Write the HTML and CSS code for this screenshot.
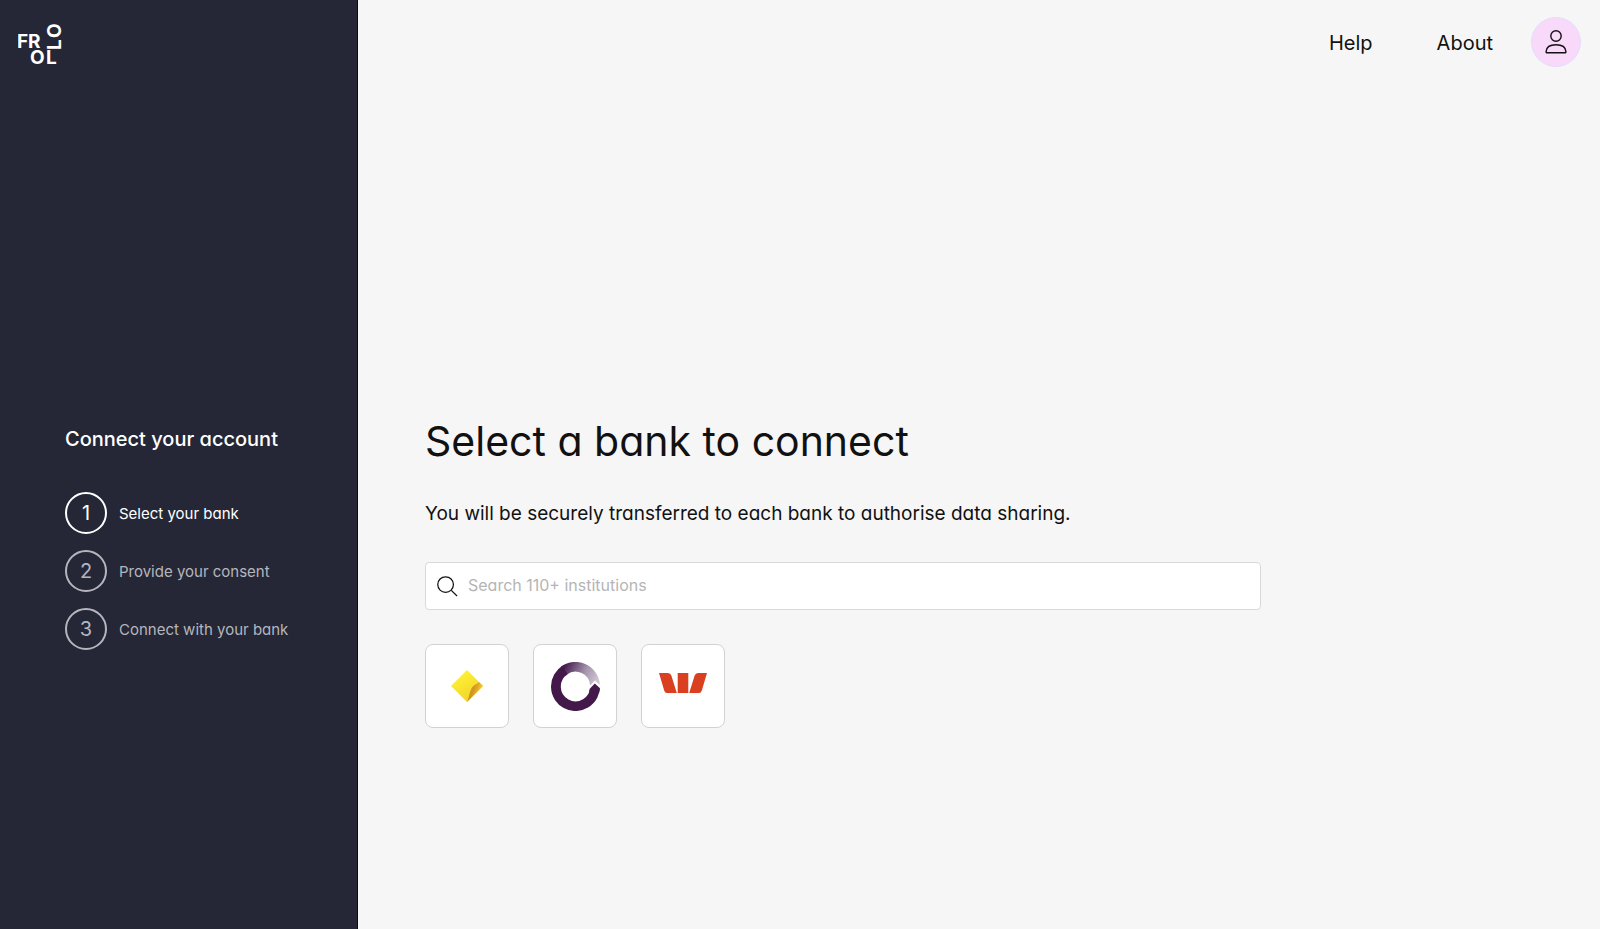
FILE: index.html
```html
<!DOCTYPE html>
<html lang="en">
<head>
  <meta charset="UTF-8">
  <meta name="viewport" content="width=device-width, initial-scale=1.0">
  <title>Frollo - Select a bank</title>
  <link rel="stylesheet" href="styles.css">
</head>
<body>
  <div class="page">
    <!-- left panel -->
    <aside class="sidebar">
      <a class="logo" href="#" aria-label="Frollo">
        <svg width="52" height="52" viewBox="0 0 52 52" aria-hidden="true">
          <text x="-1" y="25">F</text>
          <text x="10" y="25">R</text>
          <text x="12" y="41">O</text>
          <text x="28" y="41">L</text>
          <text transform="translate(43 27) rotate(-90)">L</text>
          <text transform="translate(43 15) rotate(-90)">O</text>
        </svg>
      </a>
      <nav class="steps">
        <h2>Connect your account</h2>
        <ol>
          <li class="step active"><span class="num">1</span>Select your bank</li>
          <li class="step"><span class="num">2</span>Provide your consent</li>
          <li class="step"><span class="num">3</span>Connect with your bank</li>
        </ol>
      </nav>
    </aside>

    <div class="main">
      <header class="topbar">
        <a class="top-link" href="#">Help</a>
        <a class="top-link" href="#">About</a>
        <button class="profile" type="button" aria-label="Profile">
          <svg width="22" height="24" viewBox="0 0 22 24" fill="none" stroke="#111" stroke-width="1.4" aria-hidden="true">
            <circle cx="11" cy="6" r="5.2"/>
            <path d="M2 22.8Q1 22.8 1.1 21.6C1.4 16.8 5.2 14.8 11 14.8S20.6 16.8 20.9 21.6Q21 22.8 20 22.8Z"/>
          </svg>
        </button>
      </header>

      <!-- bank picker -->
      <main class="content">
        <h1>Select a bank to connect</h1>
        <p>You will be securely transferred to each bank to authorise data sharing.</p>

        <label class="search">
          <svg width="21" height="21" viewBox="0 0 22 22" fill="none" stroke="#111" stroke-width="1.3" aria-hidden="true">
            <circle cx="9" cy="9" r="8.2"/>
            <path d="M15 15l6 6"/>
          </svg>
          <input type="text" placeholder="Search 110+ institutions" aria-label="Search institutions">
        </label>

        <div class="banks">
          <button class="bank" type="button" aria-label="CommBank">
            <svg width="32" height="32" viewBox="0 0 32 32">
              <defs>
                <linearGradient id="yellow" x1="0.2" y1="0.1" x2="0.7" y2="0.9">
                  <stop offset="0" stop-color="#fff233"/>
                  <stop offset="1" stop-color="#f3d42b"/>
                </linearGradient>
                <linearGradient id="gold" x1="0" y1="0.4" x2="1" y2="0.8">
                  <stop offset="0" stop-color="#c08420"/>
                  <stop offset="0.4" stop-color="#d99c24"/>
                  <stop offset="0.8" stop-color="#f7cf2c"/>
                </linearGradient>
              </defs>
              <path fill="url(#yellow)" d="M16 0L32 16L16 32L0 16Z"/>
              <path fill="url(#gold)" d="M28 12L32 16L16 32C18 28 18 24 20.5 18.5C22 15.5 25 14.5 28 12Z"/>
            </svg>
          </button>
          <button class="bank" type="button" aria-label="Bank with ring logo">
            <svg width="49" height="49" viewBox="0 0 49 49" fill="none" stroke-width="9.8">
              <defs>
                <linearGradient id="fade" gradientUnits="userSpaceOnUse" x1="13" y1="4" x2="45" y2="20">
                  <stop offset="0" stop-color="#43194a"/>
                  <stop offset="0.6" stop-color="#a594ad"/>
                  <stop offset="1" stop-color="#cdc3d1"/>
                </linearGradient>
              </defs>
              <path stroke="url(#fade)" d="M13 8.5A19.6 19.6 0 0 1 44 23"/>
              <path stroke="#43194a" d="M14 8A19.6 19.6 0 1 0 44.1 24.5"/>
              <path fill="#fff" stroke="none" d="M37 25.5L44 18.5L50 24V27H37Z"/>
              <path fill="#43194a" stroke="none" d="M39 26.5L43.8 21.5L49 26.2L48 30.5L38 29.5Z"/>
            </svg>
          </button>
          <button class="bank" type="button" aria-label="Westpac">
            <svg class="westpac" width="48" height="20" viewBox="0 0 48 20" fill="#da3f20">
              <path d="M0 0H8.5Q11.5 0 12.5 3L17.8 20H8Q6 20 5.2 17.5Z"/>
              <path d="M18.7 0H29.3V20H18.7Z"/>
              <path d="M48 0H39.5Q36.5 0 35.5 3L30.2 20H40Q42 20 42.8 17.5Z"/>
            </svg>
          </button>
        </div>
      </main>
    </div>
  </div>
</body>
</html>
```
FILE: styles.css
```css
* {
  box-sizing: border-box;
}

body {
  margin: 0;
  font-family: Inter, "Liberation Sans", sans-serif;
  /* single-storey a */
  font-feature-settings: "cv11";
  color: #111;
  background: #f6f6f6;
}

h1, h2, p, ol {
  margin: 0;
  padding: 0;
  font-weight: 400;
}

button {
  padding: 0;
  cursor: pointer;
}

svg {
  display: block;
  flex-shrink: 0;
}

.page {
  display: flex;
  min-height: 100vh;
}

/* left panel */
.sidebar {
  width: 358px;
  flex-shrink: 0;
  background: #252736;
  border-right: 1px solid #0b0b12;
  color: #fff;
}

.logo {
  display: block;
  height: 84px;
  padding: 23px 18px 0;
}

.logo text {
  font-size: 19px;
  font-weight: 700;
  fill: #fff;
}

.steps {
  padding: 342px 20px 0 65px;
}

.steps h2 {
  font-size: 20px;
  line-height: 26px;
  font-weight: 500;
}

.steps ol {
  display: flex;
  flex-direction: column;
  gap: 16px;
  margin-top: 40px;
  list-style: none;
}

.step {
  display: flex;
  align-items: center;
  gap: 12px;
  font-size: 15px;
  color: #b5b6bd;
}

.num {
  display: flex;
  align-items: center;
  justify-content: center;
  width: 42px;
  height: 42px;
  border: 2px solid #b5b6bd;
  border-radius: 50%;
  font-size: 20px;
}

.active {
  color: #fff;
}

.active .num {
  border-color: #fff;
}

/* right side */
.main {
  flex: 1;
}

.topbar {
  display: flex;
  align-items: center;
  justify-content: flex-end;
  height: 84px;
  padding-right: 19px;
}

.top-link {
  margin-right: 64px;
  padding-top: 2px;
  font-size: 20px;
  color: #111;
  text-decoration: none;
}

.top-link + .top-link {
  margin-right: 38px;
}

.profile {
  display: flex;
  align-items: center;
  justify-content: center;
  width: 50px;
  height: 50px;
  border: 1px solid #e6dcfb;
  border-radius: 50%;
  background: #f8d9fa;
}

.content {
  max-width: 903px;
  padding: 329px 0 40px 67px;
}

h1 {
  font-size: 41px;
  line-height: 56px;
}

.content p {
  margin-top: 32px;
  font-size: 19px;
  line-height: 26px;
}

.search {
  display: flex;
  align-items: center;
  gap: 10px;
  height: 48px;
  margin-top: 35px;
  padding: 0 11px;
  background: #fff;
  border: 1px solid #d9d9db;
  border-radius: 4px;
}

.search input {
  flex: 1;
  padding: 0 0 2px;
  border: 0;
  outline: 0;
  background: none;
  font: inherit;
  font-feature-settings: inherit;
  font-size: 16px;
}

.search input::placeholder {
  color: #b5b5b5;
}

.banks {
  display: flex;
  gap: 24px;
  margin-top: 34px;
}

.bank {
  display: flex;
  align-items: center;
  justify-content: center;
  width: 84px;
  height: 84px;
  background: #fff;
  border: 1px solid #d2d2d6;
  border-radius: 8px;
}

.westpac {
  margin-bottom: 6px;
}
```
